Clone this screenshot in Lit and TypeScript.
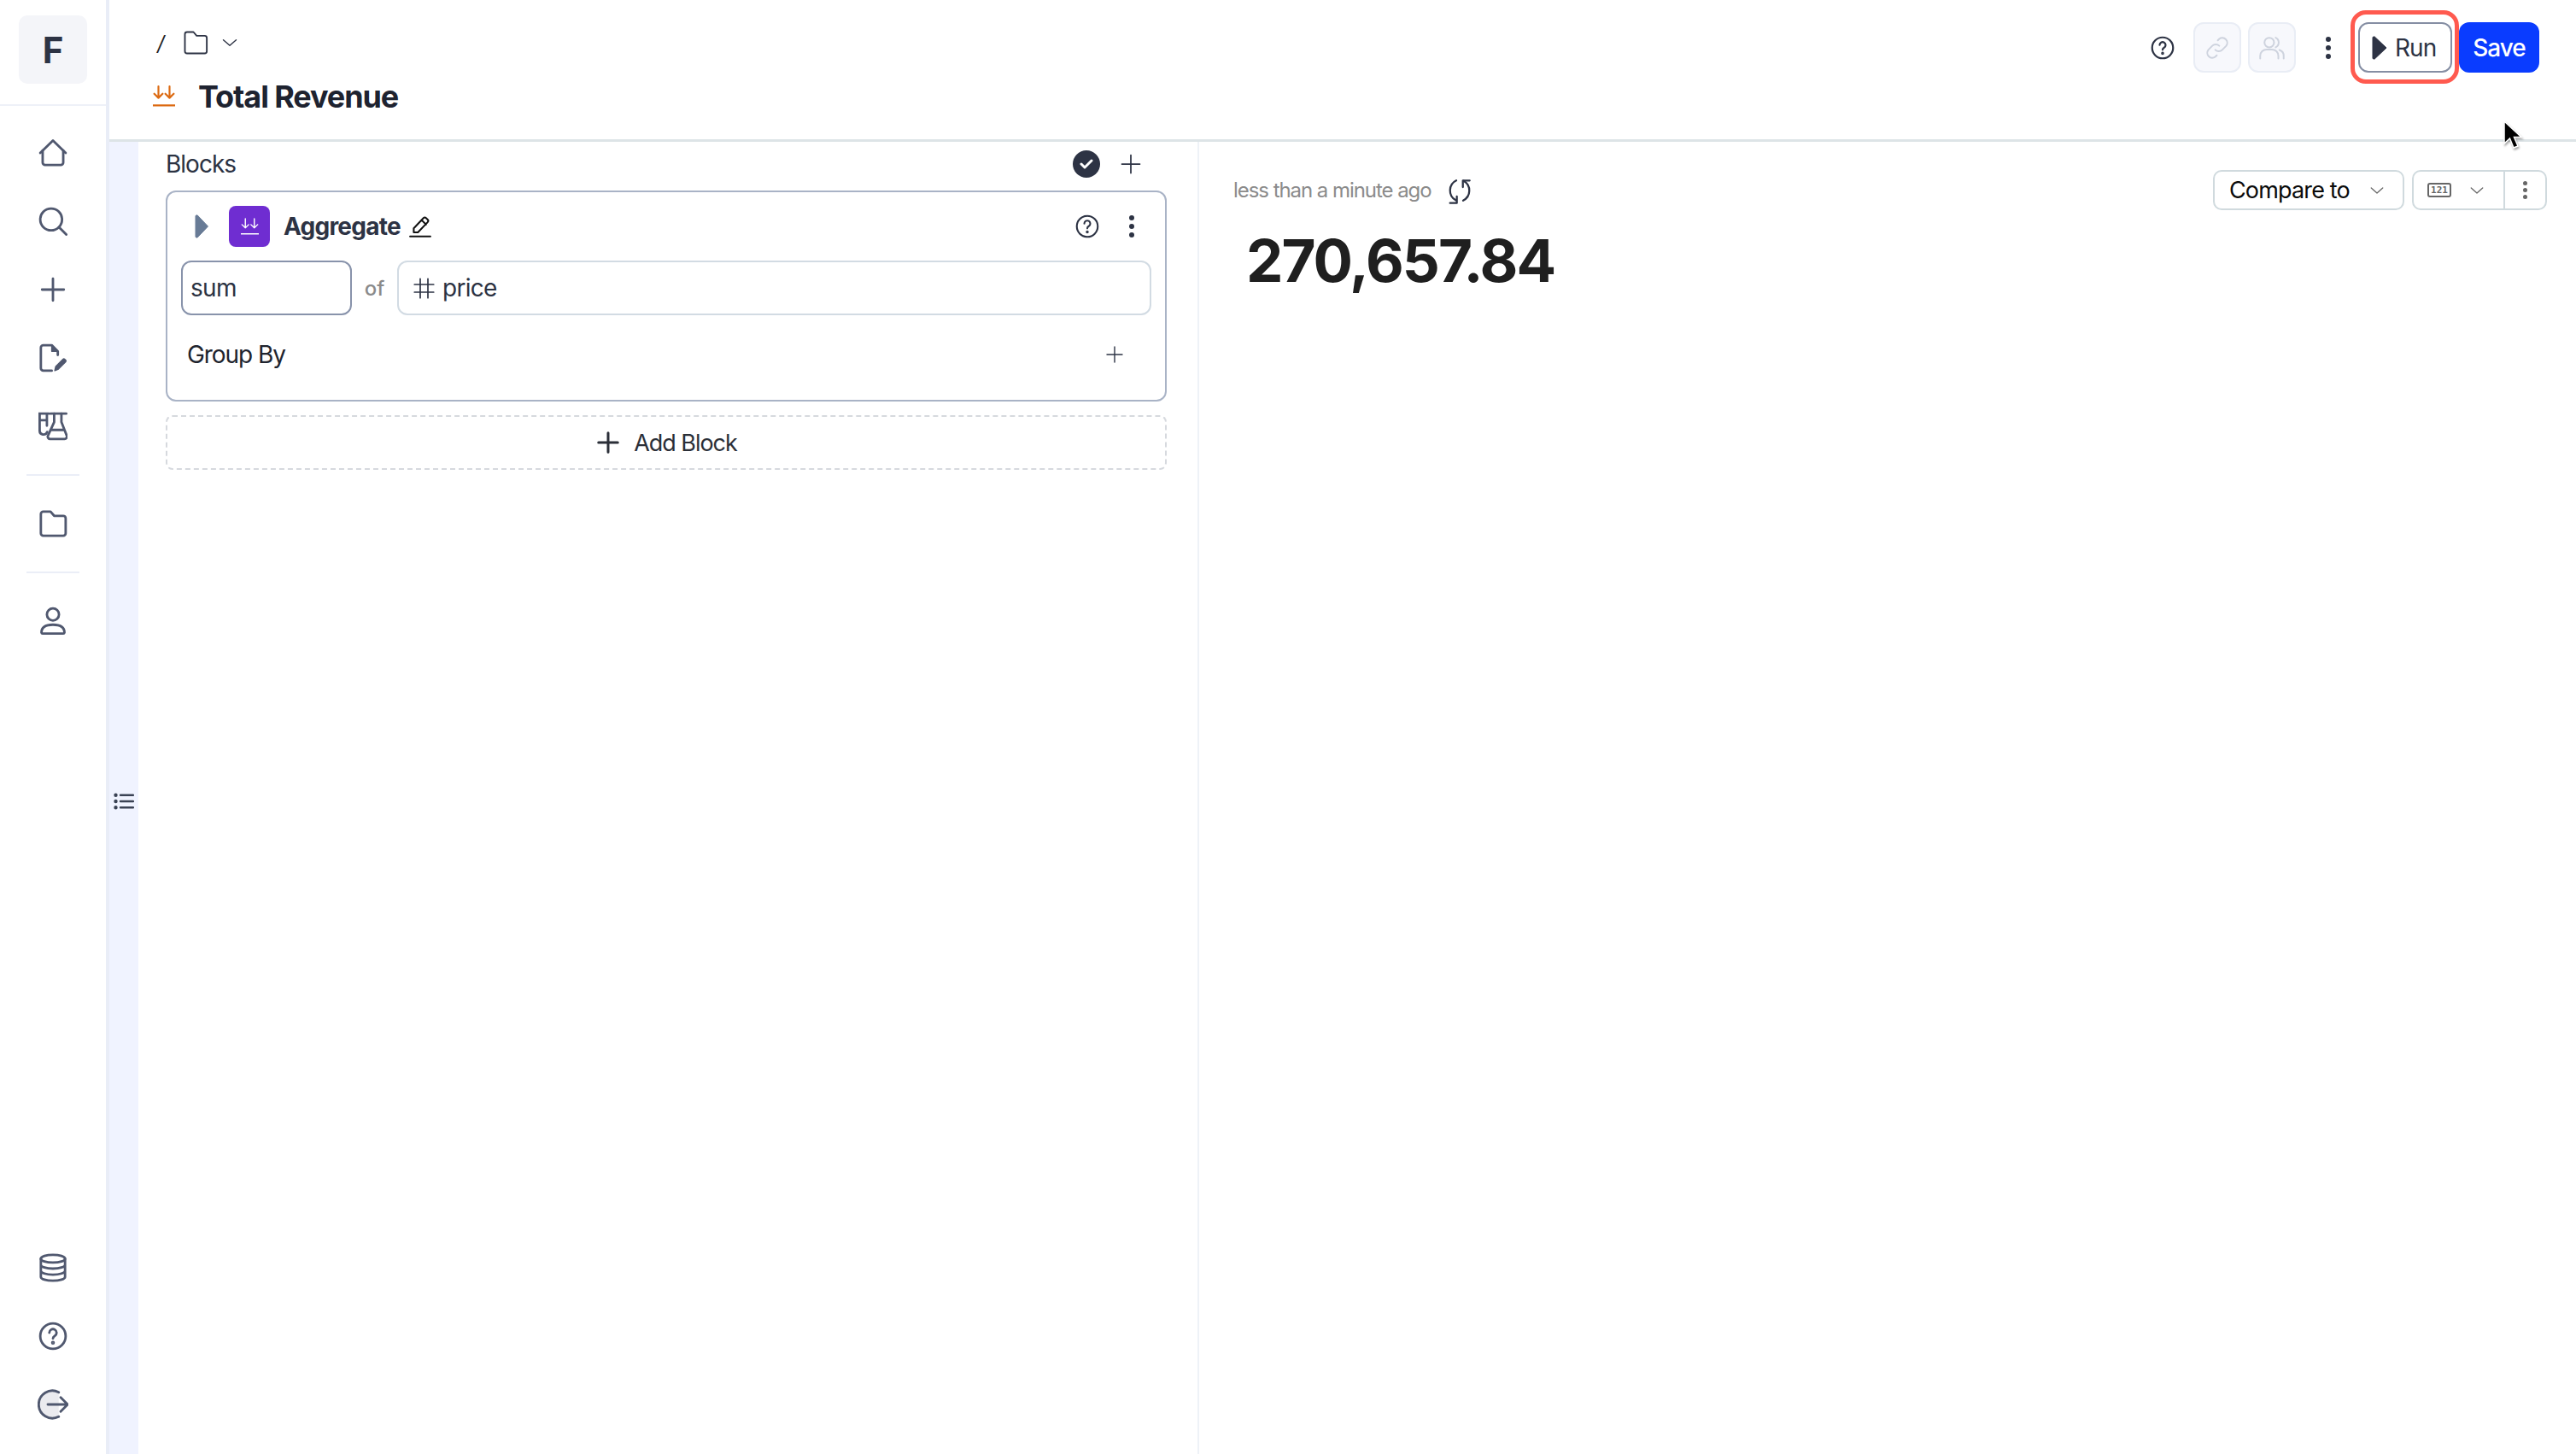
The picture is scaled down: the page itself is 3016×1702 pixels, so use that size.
import { LitElement, html, css, svg } from "lit";
import { customElement } from "lit/decorators.js";

const ico = (size: number, body: unknown, color = "currentColor", sw = 1.5, cls = "") =>
  html`<svg class=${cls} width=${size} height=${size} viewBox="0 0 24 24" fill="none" stroke=${color} stroke-width=${sw} stroke-linecap="round" stroke-linejoin="round">${body}</svg>`;

const P = {
  home: svg`<path d="M1.5 12 12 1.8 22.5 12"/><path d="M3.5 10v10a2 2 0 0 0 2 2h13a2 2 0 0 0 2-2V10"/>`,
  search: svg`<circle cx="10.5" cy="10.5" r="9"/><path d="m17 17 6 6"/>`,
  plus: svg`<path d="M12 3v18M3 12h18"/>`,
  doc: svg`<path d="M16 9.500V6.500L11 1.500H4a2 2 0 0 0-2 2v17a2 2 0 0 0 2 2h7"/><path d="M11 2v4.500h4.500z" fill="currentColor" stroke-width="1"/><path d="m13.500 22.500.8-3.500 6-6a1 1 0 0 1 1.400 0l.8.8a1 1 0 0 1 0 1.400l-6 6z" fill="currentColor" stroke-width="1"/>`,
  lab: svg`<path d="M0 1.500h8.500M10 1.500h13M1 1.500v14a3.200 3.200 0 0 0 6.200 1.200M7 1.500v10M1.500 7h5.500"/><path d="M13 1.500v7L8 19.500A2 2 0 0 0 10 22.500h11.500a2 2 0 0 0 1.800-3L19 8.500v-7M10.500 15h11"/>`,
  folder: svg`<path d="M2 20V4a2 2 0 0 1 2-2h6l3 3.500h7.500a2 2 0 0 1 2 2V20a2 2 0 0 1-2 2H4a2 2 0 0 1-2-2z"/>`,
  user: svg`<circle cx="12" cy="6.500" r="5"/><path d="M2.500 21.500c0-4.500 4-6.500 9.500-6.500s9.500 2 9.500 6.500a1 1 0 0 1-1 .8H3.500a1 1 0 0 1-1-.8z"/>`,
  db: svg`<ellipse cx="12" cy="4.500" rx="10" ry="3.200"/><path d="M2 4.500v15c0 1.800 4.500 3.200 10 3.200s10-1.400 10-3.200v-15M2 9.500c0 1.800 4.500 3.200 10 3.200s10-1.400 10-3.200M2 14.500c0 1.800 4.500 3.200 10 3.200s10-1.400 10-3.200"/>`,
  help: svg`<circle cx="12" cy="12" r="10.500"/><path d="M9 9.200a3 3 0 1 1 4.500 2.600c-1 .6-1.500 1.100-1.500 2.200"/><circle cx="12" cy="17.500" r=".6" fill="currentColor"/>`,
  logout: svg`<path d="M16.500 2.500A10.700 10.700 0 1 0 16.500 21.500" fill="#ebebef"/><path d="M8 12h15.500M18 6.500 23.500 12 18 17.500"/>`,
  chev: svg`<path d="m3 8 9 8 9-8"/>`,
  link: svg`<path d="M10 14a5 5 0 0 0 7 0l4-4a5 5 0 0 0-7-7l-1.500 1.500"/><path d="M14 10a5 5 0 0 0-7 0l-4 4a5 5 0 0 0 7 7l1.500-1.500"/>`,
  users: svg`<circle cx="9.500" cy="7" r="4.500"/><path d="M1 22v-2.500a6 6 0 0 1 6-6h5a6 6 0 0 1 6 6V22"/><path d="M15.500 2.500a5 5 0 0 1 0 9M19 14c2.500.8 4 3 4 5.500V22"/>`,
  pencil: svg`<path d="M1 22.800h22"/><path d="M5 18.500V14L15.500 3a2 2 0 0 1 2.800 0l1.700 1.700a2 2 0 0 1 0 2.800L9.500 18.500zM13.500 5.200l4.800 4.800"/>`,
  refresh: svg`<path d="M9 3.200A9.800 9.800 0 0 0 8.500 20.500M15 20.800A9.800 9.800 0 0 0 15.500 3.500"/><path d="M14.800 9V3.200h6M3.500 23h6v-5.800"/>`,
  hash: svg`<path d="M8 2v20M16 2v20M2 8h20M2 16h20"/>`,
  arrows: svg`<path d="M6 1v12.500M1.500 9 6 13.500 10.500 9M18 1v12.500M13.500 9l4.500 4.500L22.500 9M0 21.500h24"/>`,
  list: svg`<path d="M8 4.800h15M8 12h15M8 19.200h15"/><circle cx="2.500" cy="4.800" r="1" fill="currentColor"/><circle cx="2.500" cy="12" r="1" fill="currentColor"/><circle cx="2.500" cy="19.200" r="1" fill="currentColor"/>`,
};

const dots = (cls = "dots") => html`<span class=${cls}><i></i><i></i><i></i></span>`;

@customElement("app-root")
export class AppRoot extends LitElement {
  static styles = css`
    :host { display: flex; height: 100vh; width: 100%; overflow: hidden; position: relative; background: #fff; color: #2b3242; font-family: Inter, "Liberation Sans", sans-serif; }
    * { box-sizing: border-box; }
    svg { display: block; flex: none; }
    .nav { width: 128px; flex: none; border-right: 4px solid #e9edf7; display: flex; flex-direction: column; color: #50586f; }
    .logo-wrap { height: 124px; flex: none; padding: 18px 22px; border-bottom: 2px solid #eef1f8; }
    .logo { width: 80px; height: 80px; border-radius: 10px; background: #f4f5f9; display: flex; align-items: center; justify-content: center; font-weight: 700; font-size: 42px; color: #2d3344; }
    .nav-top { display: flex; flex-direction: column; align-items: center; padding-top: 15px; }
    .nav-item { height: 80px; display: flex; align-items: center; justify-content: center; width: 100%; }
    .nav-sep { width: 62px; height: 2px; background: #ebeef7; margin: 16px 0 16px; }
    .nav-bottom { margin-top: auto; display: flex; flex-direction: column; align-items: center; padding-bottom: 18px; }
    .main { flex: 1; min-width: 0; display: flex; flex-direction: column; }
    .header { height: 166px; flex: none; border-bottom: 3px solid #dde4e7; display: flex; justify-content: space-between; padding: 26px 43px 0 51px; }
    .crumbs { display: flex; align-items: center; height: 24px; margin: 12px 0 0 5px; color: #2d3344; }
    .slash { font-size: 24px; color: #222; font-style: italic; width: 30px; }
    .crumb-chev { margin-left: 15px; }
    .title-row { display: flex; align-items: center; gap: 27px; margin-top: 29px; }
    .title { font-size: 36px; font-weight: 700; letter-spacing: -1.1px; color: #1e2330; line-height: 44px; }
    .actions { display: flex; align-items: flex-start; }
    .sq { width: 56px; height: 59px; border-radius: 12px; border: 2px solid #e9edf5; background: #f7f8fc; display: flex; align-items: center; justify-content: center; color: #ced3de; }
    .act-help { margin: 16px 22px 0 0; color: #2d3344; }
    .sq + .sq { margin-left: 8px; }
    .act-dots { width: 73px; height: 59px; display: flex; align-items: center; justify-content: center; padding-left: 2px; }
    .dots { display: flex; flex-direction: column; gap: 4px; }
    .dots i { display: block; width: 6px; height: 6px; border-radius: 50%; background: #2d3344; }
    .run-wrap { position: relative; }
    .run { width: 110px; height: 59px; border: 2px solid #858ea3; border-radius: 12px; display: flex; align-items: center; padding-left: 14px; gap: 9px; font-size: 28px; letter-spacing: -.9px; color: #2d3344; background: #fff; }
    .run-hl { position: absolute; left: -9px; right: -8px; top: -14px; bottom: -13px; border: 5px solid #ff5a4f; border-radius: 18px; pointer-events: none; }
    .save { width: 94px; height: 59px; margin-left: 8px; border-radius: 12px; background: #0a3cff; color: #fff; display: flex; align-items: center; justify-content: center; font-size: 28px; font-weight: 500; letter-spacing: -1px; }
    .body { flex: 1; min-height: 0; display: flex; }
    .strip { width: 34px; flex: none; background: #f0f3ff; display: flex; flex-direction: column; align-items: center; padding-top: 760px; color: #3a4254; }
    .blocks { width: 1242px; flex: none; border-right: 2px solid #eef2f7; padding: 0 36px 0 32px; }
    .blocks-head { height: 57px; padding: 0 28px 6px 0; display: flex; align-items: center; justify-content: space-between; font-size: 28px; letter-spacing: -1px; }
    .head-icons { display: flex; align-items: center; gap: 22px; }
    .ok { width: 32px; height: 32px; border-radius: 50%; background: #2d3344; display: flex; align-items: center; justify-content: center; }
    .card { height: 247px; border: 2px solid #a9b3c6; border-radius: 12px; padding: 16px 16px 0 16px; }
    .card-head { height: 48px; display: flex; align-items: center; }
    .tri { width: 16px; height: 28px; margin-left: 16px; }
    .badge { width: 48px; height: 48px; margin-left: 24px; border-radius: 8px; background: #6f2dd1; display: flex; align-items: center; justify-content: center; color: #fff; }
    .agg { font-size: 28px; font-weight: 700; letter-spacing: -.75px; margin-left: 16px; color: #2d3344; }
    .pencil { margin-left: 10px; color: #111; }
    .card-icons { margin-left: auto; display: flex; align-items: center; gap: 35px; padding-right: 20px; }
    .fields { display: flex; align-items: center; margin-top: 16px; }
    .field { height: 64px; border-radius: 12px; display: flex; align-items: center; font-size: 28px; letter-spacing: -.7px; }
    .sum { width: 200px; border: 2px solid #8893ab; padding-left: 9px; }
    .of { width: 53px; text-align: center; color: #8b8b8b; font-size: 24px; font-weight: 500; }
    .price { flex: 1; border: 2px solid #d2dbe3; padding-left: 16px; gap: 8px; }
    .group { display: flex; align-items: center; justify-content: space-between; height: 48px; margin-top: 22px; padding: 0 31px 0 7px; font-size: 28px; letter-spacing: -1.05px; color: #20242e; }
    .add { height: 64px; margin-top: 16px; border: 2px dashed #d6d9de; border-radius: 8px; display: flex; align-items: center; justify-content: center; gap: 15px; font-size: 27px; letter-spacing: -1.05px; color: #2b2f38; }
    .right { flex: 1; min-width: 0; position: relative; padding: 0 34px 0 40px; }
    .r-head { display: flex; align-items: flex-start; justify-content: space-between; padding-top: 33px; height: 82px; }
    .ago { display: flex; align-items: center; gap: 17px; font-size: 24px; letter-spacing: -1.05px; color: #8b8b8b; height: 47px; }
    .ago svg { color: #2d3344; }
    .r-tools { display: flex; gap: 9px; }
    .cmp, .tool { height: 47px; border: 2px solid #d0dade; border-radius: 10px; display: flex; align-items: center; }
    .cmp { width: 224px; padding-left: 17px; font-size: 27px; letter-spacing: -.85px; color: #0b0b0b; }
    .cmp svg { margin-left: auto; margin-right: 21px; color: #666; }
    .tool { width: 158px; }
    .tool-l { width: 107px; height: 100%; border-right: 2px solid #d0dade; display: flex; align-items: center; padding-left: 16px; color: #666; }
    .tool-l .ch { margin-left: 21px; }
    .tool-r { flex: 1; display: flex; justify-content: center; }
    .tool-r .dots { gap: 3px; }
    .tool-r .dots i { background: #666; width: 5px; height: 5px; }
    .n121 { width: 28px; height: 17px; border: 2px solid #666; border-radius: 3px; font: 700 11px/13px "DejaVu Sans Mono", monospace; text-align: center; letter-spacing: 0; color: #666; }
    .value { font-size: 69px; font-weight: 700; letter-spacing: -2px; line-height: 88px; color: #1f1f1f; margin: 13px 0 0 15px; }
    .cursor { position: absolute; left: 2930px; top: 140px; filter: drop-shadow(1px 2px 1px rgba(0,0,0,.35)); }
  `;

  render() {
    return html`
      <nav class="nav">
        <div class="logo-wrap"><div class="logo">F</div></div>
        <div class="nav-top">
          ${[P.home, P.search, P.plus, P.doc, P.lab].map((p) => html`<div class="nav-item">${ico(34, p, "currentColor", 2)}</div>`)}
          <div class="nav-sep"></div>
          <div class="nav-item">${ico(34, P.folder, "currentColor", 2)}</div>
          <div class="nav-sep"></div>
          <div class="nav-item">${ico(34, P.user, "currentColor", 2)}</div>
        </div>
        <div class="nav-bottom">
          <div class="nav-item">${ico(34, P.db, "currentColor", 2)}</div>
          <div class="nav-item">${ico(34, P.help, "currentColor", 2)}</div>
          <div class="nav-item">${ico(36, P.logout, "currentColor", 1.9)}</div>
        </div>
      </nav>
      <div class="main">
        <header class="header">
          <div>
            <div class="crumbs">
              <span class="slash">/</span>
              ${ico(30, P.folder, "currentColor", 1.5)}
              <span class="crumb-chev">${ico(20, P.chev, "currentColor", 1.7)}</span>
            </div>
            <div class="title-row">
              ${ico(26, P.arrows, "#dc6a12", 2)}
              <div class="title">Total Revenue</div>
            </div>
          </div>
          <div class="actions">
            <div class="act-help">${ico(28, P.help, "currentColor", 1.9)}</div>
            <div class="sq">${ico(28, P.link, "currentColor", 1.7)}</div>
            <div class="sq">${ico(30, P.users, "currentColor", 1.6)}</div>
            <div class="act-dots">${dots()}</div>
            <div class="run-wrap">
              <div class="run">
                <svg width="18" height="28" viewBox="0 0 18 28"><path d="M1 1.500 3 .800 17 14 3 27.200 1 26.500z" fill="#2d3344" stroke="#2d3344" stroke-linejoin="round"/></svg>
                Run
              </div>
              <div class="run-hl"></div>
            </div>
            <div class="save">Save</div>
          </div>
        </header>
        <div class="body">
          <div class="strip">${ico(24, P.list, "currentColor", 2.4)}</div>
          <section class="blocks">
            <div class="blocks-head">
              <span>Blocks</span>
              <div class="head-icons">
                <div class="ok"><svg width="18" height="14" viewBox="0 0 18 14" fill="none" stroke="#fff" stroke-width="3" stroke-linecap="round" stroke-linejoin="round"><path d="m3 7 4 4 8-8"/></svg></div>
                ${ico(28, P.plus, "#2d3344", 1.5)}
              </div>
            </div>
            <div class="card">
              <div class="card-head">
                <svg class="tri" viewBox="0 0 16 28"><path d="M1 1.500 3 .800 15.500 14 3 27.200 1 26.500z" fill="#687b96" stroke="#687b96" stroke-linejoin="round"/></svg>
                <div class="badge">${ico(21, P.arrows, "currentColor", 1.6)}</div>
                <span class="agg">Aggregate</span>
                <span class="pencil">${ico(26, P.pencil, "currentColor", 1.9)}</span>
                <div class="card-icons">
                  ${ico(28, P.help, "#2d3344", 1.8)}
                  ${dots()}
                </div>
              </div>
              <div class="fields">
                <div class="field sum">sum</div>
                <div class="of">of</div>
                <div class="field price">${ico(27, P.hash, "#2d3344", 1.5)}<span>price</span></div>
              </div>
              <div class="group">
                <span>Group By</span>
                ${ico(24, P.plus, "#2d3344", 1.4)}
              </div>
            </div>
            <div class="add">${ico(30, P.plus, "#2b2f38", 2.4)}<span>Add Block</span></div>
          </section>
          <section class="right">
            <div class="r-head">
              <div class="ago"><span>less than a minute ago</span>${ico(32, P.refresh, "currentColor", 1.7)}</div>
              <div class="r-tools">
                <div class="cmp">Compare to ${ico(18, P.chev, "currentColor", 1.7)}</div>
                <div class="tool">
                  <div class="tool-l"><div class="n121">121</div><span class="ch">${ico(18, P.chev, "currentColor", 1.7)}</span></div>
                  <div class="tool-r">${dots()}</div>
                </div>
              </div>
            </div>
            <div class="value">270,657.84</div>
          </section>
        </div>
      </div>
      <svg class="cursor" width="24" height="38" viewBox="0 0 24 38"><path d="M2 2v26l6.500-6 4.500 11 5-2-4.500-10.500H22z" fill="#000" stroke="#fff" stroke-width="1.500"/></svg>
    `;
  }
}
